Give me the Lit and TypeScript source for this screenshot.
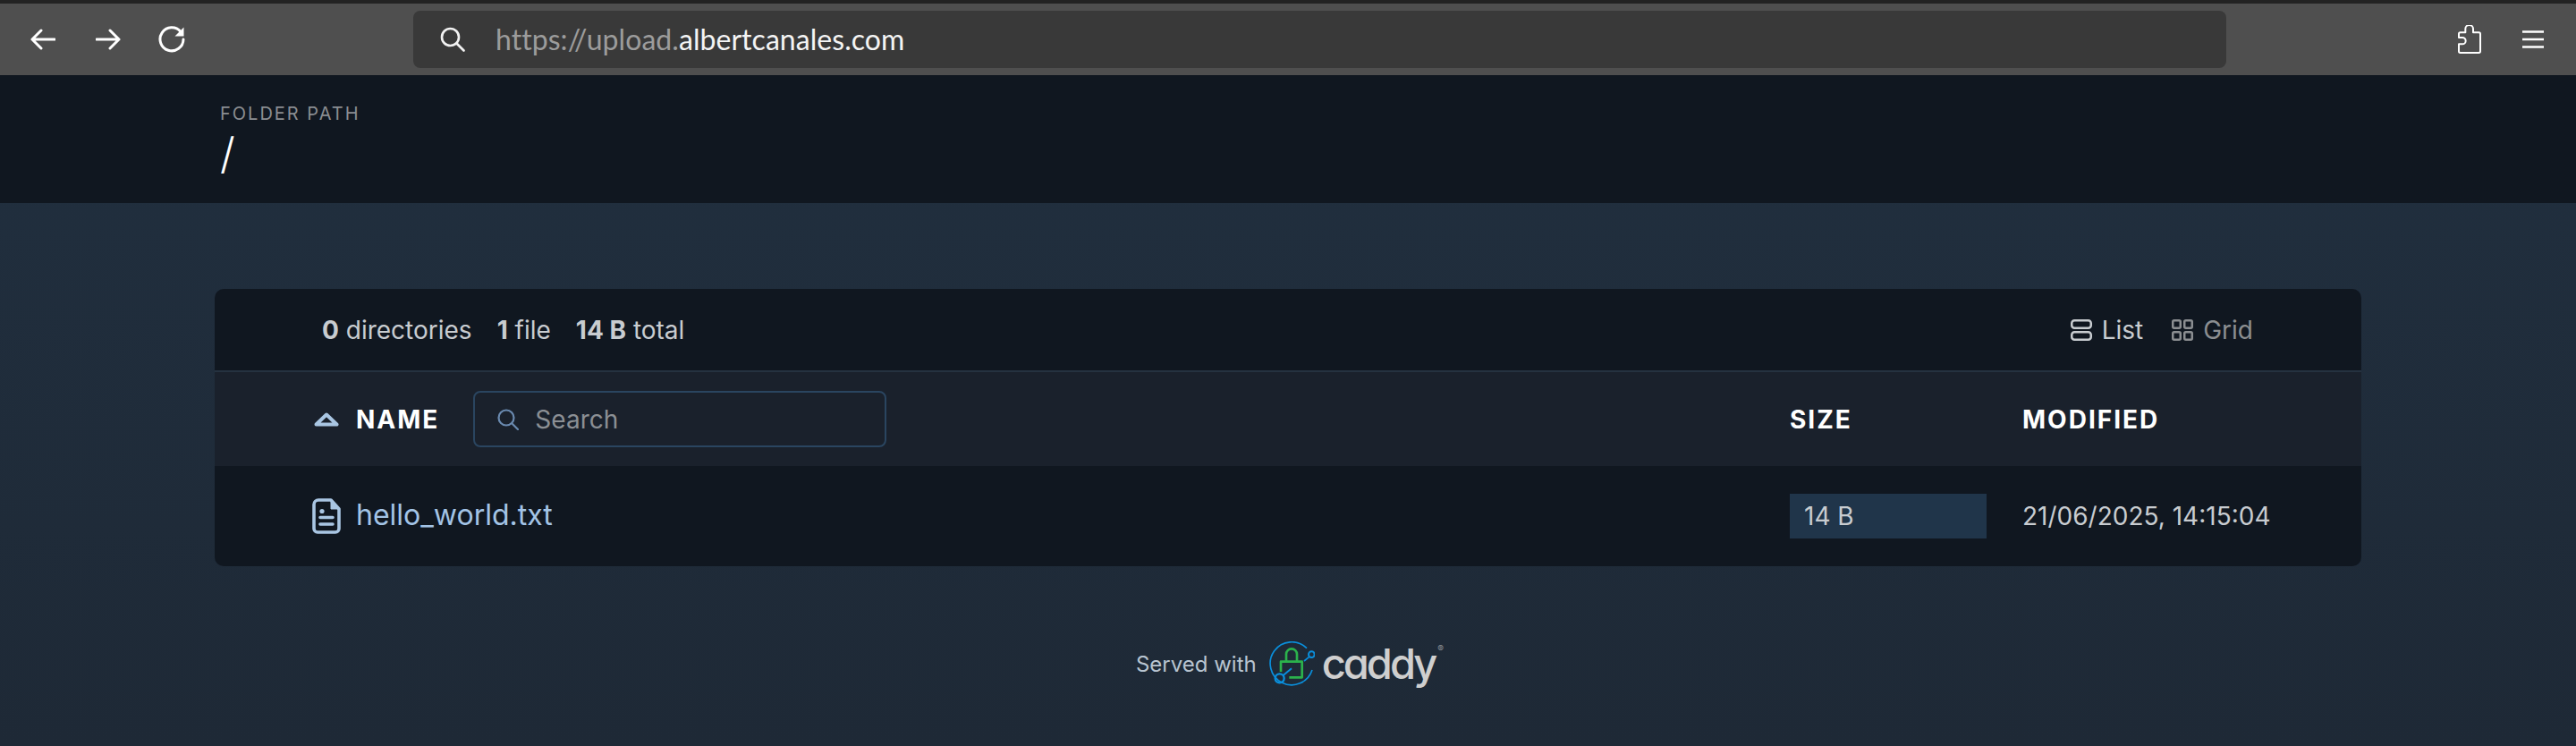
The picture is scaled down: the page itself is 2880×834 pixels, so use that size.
import { LitElement, html, css } from 'lit';
import { customElement } from 'lit/decorators.js';

@customElement('app-root')
export class AppRoot extends LitElement {
  static styles = css`
    :host {
      display: block;
      height: 834px;
      overflow: hidden;
      font-family: Inter, "Liberation Sans", sans-serif;
      background: linear-gradient(to bottom, #213040, #1e2936);
    }
    svg { display: block; flex: none; }

    /* browser chrome */
    .chrome {
      display: flex;
      align-items: center;
      height: 80px;
      border-top: 4px solid #232323;
      background: #4f4f4f;
      padding: 0 36px 0 34px;
    }
    .fwd { margin-left: 45px; }
    .reload { margin-left: 42px; }
    .urlbar {
      flex: 1;
      display: flex;
      align-items: center;
      height: 64px;
      margin: 0 259px 0 255px;
      padding-left: 30px;
      border-radius: 8px;
      background: #393939;
      box-sizing: border-box;
    }
    .url {
      margin: -2px 0 0 34px;
      font: 400 32px Lato, "Open Sans", sans-serif;
      letter-spacing: 0.05px;
      color: #f4f4f4;
    }
    .url span { color: #9c9c9c; }
    .menu { margin-left: 46px; }

    /* folder path */
    .path {
      height: 143px;
      box-sizing: border-box;
      padding: 33px 0 0 246px;
      background: #101720;
    }
    .path-label {
      font-size: 20px;
      line-height: 20px;
      letter-spacing: 2px;
      color: #8a8d91;
    }
    .path-value {
      margin-top: 10px;
      font-size: 48px;
      font-weight: 300;
      line-height: 50px;
      color: #fff;
    }

    /* listing card */
    .card {
      width: 2400px;
      margin: 96px 0 0 240px;
      border-radius: 10px;
      overflow: hidden;
      background: #101720;
    }
    .summary {
      display: flex;
      align-items: center;
      height: 91px;
      padding: 0 121px 0 120px;
      font-size: 28px;
      color: #c8ccd0;
    }
    .summary b { font-weight: 700; }
    .stat { margin-right: 28px; }
    .views { margin-left: auto; display: flex; align-items: center; }
    .view { display: flex; align-items: center; gap: 11px; color: #c8ccd0; }
    .view.off { margin-left: 32px; color: #8b8e91; }

    .cols {
      display: grid;
      grid-template-columns: 1651px 260px 1fr;
      align-items: center;
      padding-left: 110px;
    }
    .head {
      height: 105px;
      border-top: 2px solid #253240;
      background: #1a212c;
      font-size: 28px;
      font-weight: 700;
      letter-spacing: 2px;
      color: #fff;
    }
    .name-head { display: flex; align-items: center; }
    .sort { margin: 0 19px 0 1px; }
    .search {
      display: flex;
      align-items: center;
      width: 462px;
      height: 63px;
      box-sizing: border-box;
      margin-left: 38px;
      padding-left: 25px;
      border: 2px solid #2a4560;
      border-radius: 8px;
      font-size: 28px;
      font-weight: 400;
      letter-spacing: 0;
      color: #8b8f94;
    }
    .search svg { margin-right: 18px; }

    .row { height: 112px; }
    .file { display: flex; align-items: center; gap: 17px; margin-left: -1px; font-size: 32px; color: #a3c4e6; }
    .file-name { margin-top: -4px; }
    .size {
      width: 220px;
      height: 50px;
      box-sizing: border-box;
      padding-left: 16px;
      font-size: 28px;
      line-height: 50px;
      background: #20354a;
      color: #c8ccd0;
    }
    .date { font-size: 28px; color: #c8ccd0; }

    /* footer */
    .footer {
      display: flex;
      align-items: center;
      justify-content: center;
      height: 50px;
      margin: 84px 0 0 0;
      padding-left: 4px;
      font-size: 24px;
      color: #b8c4d0;
    }
    .footer .logo { margin-left: 13px; }
    .caddy {
      margin-left: 8px;
      font-size: 47px;
      font-weight: 500;
      font-feature-settings: "cv11";
      line-height: 50px;
      letter-spacing: -3px;
      color: #cfcfcf;
    }
    .reg {
      align-self: flex-start;
      margin: 2px 0 0 3px;
      font-size: 10px;
      color: #8f9398;
    }
  `;

  render() {
    return html`
      <div class="chrome">
        <svg width="28" height="24" viewBox="0 0 28 24" fill="none" stroke="#fff" stroke-width="3" stroke-linecap="round" stroke-linejoin="round">
          <path d="M27 12H2M12 2 2 12l10 10" />
        </svg>
        <svg class="fwd" width="28" height="24" viewBox="0 0 28 24" fill="none" stroke="#fff" stroke-width="3" stroke-linecap="round" stroke-linejoin="round">
          <path d="M1 12h25M16 2l10 10-10 10" />
        </svg>
        <svg class="reload" width="30" height="30" viewBox="0 0 30 30" fill="none">
          <path d="M25 6.5A13 13 0 1 0 28 15" stroke="#fff" stroke-width="3" stroke-linecap="round" />
          <path d="M28.5 1.5v10h-10z" fill="#fff" />
        </svg>
        <div class="urlbar">
          <svg width="28" height="28" viewBox="0 0 28 28" fill="none" stroke="#f2f2f2" stroke-width="2.6" stroke-linecap="round">
            <circle cx="11.5" cy="11.5" r="9.5" />
            <path d="M18.5 18.5 26.5 26.5" />
          </svg>
          <div class="url"><span>https://upload.</span>albertcanales.com</div>
        </div>
        <svg width="26" height="32" viewBox="325 85 78 96" fill="none" stroke="#fff" stroke-width="6" stroke-linejoin="round">
          <path d="M333 178h62a5 5 0 0 0 5-5v-58a5 5 0 0 0-5-5h-19V98a13 13 0 0 0-26 0v12h-17a5 5 0 0 0-5 5v12h12a11 11 0 0 1 0 22h-12v24a5 5 0 0 0 5 5z" />
        </svg>
        <svg class="menu" width="24" height="20" viewBox="0 0 24 20" fill="none" stroke="#fff" stroke-width="2.5">
          <path d="M0 1.5h24M0 10h24M0 18.5h24" />
        </svg>
      </div>

      <div class="path">
        <div class="path-label">FOLDER PATH</div>
        <div class="path-value">/</div>
      </div>

      <div class="card">
        <div class="summary">
          <span class="stat"><b>0</b> directories</span>
          <span class="stat"><b>1</b> file</span>
          <span class="stat"><b>14 B</b> total</span>
          <div class="views">
            <div class="view">
              <svg width="24" height="24" viewBox="0 0 24 24" fill="none" stroke="currentColor" stroke-width="2.5">
                <rect x="1.25" y="1.25" width="21.5" height="8.5" rx="3" />
                <rect x="1.25" y="14.25" width="21.5" height="8.5" rx="3" />
              </svg>
              List
            </div>
            <div class="view off">
              <svg width="24" height="24" viewBox="0 0 24 24" fill="none" stroke="currentColor" stroke-width="2.5">
                <rect x="1.25" y="1.25" width="8.5" height="8.5" rx="1.5" />
                <rect x="14.25" y="1.25" width="8.5" height="8.5" rx="1.5" />
                <rect x="1.25" y="14.25" width="8.5" height="8.5" rx="1.5" />
                <rect x="14.25" y="14.25" width="8.5" height="8.5" rx="1.5" />
              </svg>
              Grid
            </div>
          </div>
        </div>

        <div class="cols head">
          <div class="name-head">
            <svg class="sort" width="28" height="16" viewBox="0 0 28 16" fill="none" stroke="#a9c6e3" stroke-width="4" stroke-linejoin="round">
              <path d="M14 2.5 25.5 13.5H2.5z" />
            </svg>
            NAME
            <div class="search">
              <svg width="24" height="24" viewBox="0 0 24 24" fill="none" stroke="#6a8ab0" stroke-width="2.2" stroke-linecap="round">
                <circle cx="10" cy="10" r="8.5" />
                <path d="M16.5 16.5 23 23" />
              </svg>
              Search
            </div>
          </div>
          <div>SIZE</div>
          <div>MODIFIED</div>
        </div>

        <div class="cols row">
          <div class="file">
            <svg width="32" height="40" viewBox="0 0 32 40" fill="none" stroke="#a9c6e3" stroke-linejoin="round" stroke-linecap="round">
              <path d="M7 2h14l9 10v22a4 4 0 0 1-4 4H6a4 4 0 0 1-4-4V7a5 5 0 0 1 5-5z" stroke-width="3.6" />
              <path d="M21 3v9h8z" fill="#a9c6e3" stroke-width="1" />
              <circle cx="11" cy="14.5" r="2.6" fill="#a9c6e3" stroke="none" />
              <path d="M9 21.5h14M9 29h14" stroke-width="3.6" />
            </svg>
            <span class="file-name">hello_world.txt</span>
          </div>
          <div class="size">14 B</div>
          <div class="date">21/06/2025, 14:15:04</div>
        </div>
      </div>

      <div class="footer">
        Served with
        <svg class="logo" width="52" height="50" viewBox="525 84 156 150" fill="none">
          <path d="M654 107A72 72 0 1 0 672 180" stroke="#0a8fdc" stroke-width="5" />
          <path d="M567 186V152H638V205H595" stroke="#2bb24c" stroke-width="8" stroke-linejoin="round" />
          <path d="M585 152V127a18 18 0 0 1 36 0V152" stroke="#2bb24c" stroke-width="8" />
          <circle cx="563" cy="208" r="15" stroke="#0a8fdc" stroke-width="7" />
          <path d="M575 198 603 175" stroke="#0a8fdc" stroke-width="6" />
          <circle cx="670" cy="128" r="10" stroke="#0a8fdc" stroke-width="6" />
          <path d="M662 136 645 150" stroke="#0a8fdc" stroke-width="5" />
        </svg>
        <span class="caddy">caddy</span>
        <span class="reg">®</span>
      </div>
    `;
  }
}
